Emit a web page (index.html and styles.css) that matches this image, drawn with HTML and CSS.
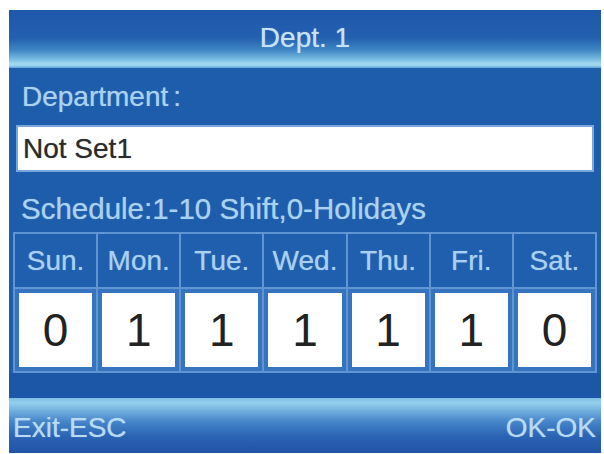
FILE: index.html
```html
<!DOCTYPE html>
<html lang="en">
<head>
<meta charset="utf-8">
<title>Dept. 1</title>
<link rel="stylesheet" href="styles.css">
</head>
<body>
<div class="screen">
  <div class="titlebar">Dept. 1</div>
  <div class="label">Department<span class="colon">:</span></div>
  <div class="input">Not Set1</div>
  <div class="schedule">Schedule:1-10 Shift,0-Holidays</div>
  <div class="grid">
    <div class="day">Sun.</div>
    <div class="day">Mon.</div>
    <div class="day">Tue.</div>
    <div class="day">Wed.</div>
    <div class="day">Thu.</div>
    <div class="day">Fri.</div>
    <div class="day">Sat.</div>
    <div class="val"><div class="box">0</div></div>
    <div class="val"><div class="box">1</div></div>
    <div class="val"><div class="box">1</div></div>
    <div class="val"><div class="box">1</div></div>
    <div class="val"><div class="box">1</div></div>
    <div class="val"><div class="box">1</div></div>
    <div class="val"><div class="box">0</div></div>
  </div>
  <div class="spacer"></div>
  <div class="footer">
    <span>Exit-ESC</span>
    <span>OK-OK</span>
  </div>
</div>
</body>
</html>
```

FILE: styles.css
```css
html, body {
  margin: 0;
  padding: 0;
  background: #ffffff;
}

body {
  font-family: "Liberation Sans", Arial, sans-serif;
}

.screen {
  margin: 10px 0 0 9px;
  width: 592px;
  height: 443px;
  background: #1e5dab;
  display: flex;
  flex-direction: column;
  overflow: hidden;
}

.titlebar {
  height: 58px;
  flex: none;
  line-height: 56px;
  text-align: center;
  font-size: 28px;
  color: #c6e3f5;
  text-shadow: 0 0 1px rgba(198, 227, 245, 0.7);
  background: linear-gradient(to bottom,
    #1f57ab 0px,
    #2360b0 28px,
    #3f86c4 40px,
    #7cc0e3 50px,
    #a6dcf1 54px,
    #8fcdea 56px,
    #5c9fd6 58px);
}

.label {
  height: 57px;
  flex: none;
  line-height: 57px;
  padding-left: 13px;
  font-size: 28px;
  color: #a9d2f1;
  text-shadow: 0 0 1px rgba(169, 210, 241, 0.7);
}

.colon {
  margin-left: 5px;
}

.input {
  height: 43px;
  flex: none;
  margin: 0 7px;
  border: 2px solid #78a7dc;
  background: #ffffff;
  line-height: 43px;
  padding-left: 5px;
  font-size: 28px;
  color: #2b2b2b;
  text-shadow: 0 0 1px rgba(43, 43, 43, 0.6);
}

.schedule {
  height: 60px;
  flex: none;
  box-sizing: border-box;
  padding: 21px 0 0 12px;
  line-height: 32px;
  font-size: 29.5px;
  color: #a9d2f1;
  text-shadow: 0 0 1px rgba(169, 210, 241, 0.7);
}

.grid {
  flex: none;
  margin: 0 4px;
  padding: 2px;
  display: grid;
  grid-template-columns: repeat(7, 1fr);
  grid-template-rows: 53px 82px;
  gap: 2px;
  background: #5f95d3;
}

.day {
  background: #1f5fae;
  display: flex;
  align-items: center;
  justify-content: center;
  font-size: 28px;
  color: #a8d0f0;
  text-shadow: 0 0 1px rgba(168, 208, 240, 0.7);
}

.val {
  background: #3674bf;
  padding: 4px;
  display: flex;
}

.box {
  flex: 1;
  background: #ffffff;
  display: flex;
  align-items: center;
  justify-content: center;
  font-size: 46px;
  color: #222222;
}

.spacer {
  height: 25px;
  flex: none;
  background: #1b57a6;
}

.footer {
  height: 55px;
  flex: none;
  box-sizing: border-box;
  padding: 4px 5px 0 4px;
  display: flex;
  justify-content: space-between;
  align-items: center;
  font-size: 28px;
  color: #b6dbf2;
  text-shadow: 0 0 1px rgba(182, 219, 242, 0.7);
  background: linear-gradient(to bottom,
    #7fbfe4 0px,
    #93d0ec 5px,
    #6ca9dc 14px,
    #4484c8 24px,
    #2b64b4 38px,
    #2152a6 55px);
}
```
